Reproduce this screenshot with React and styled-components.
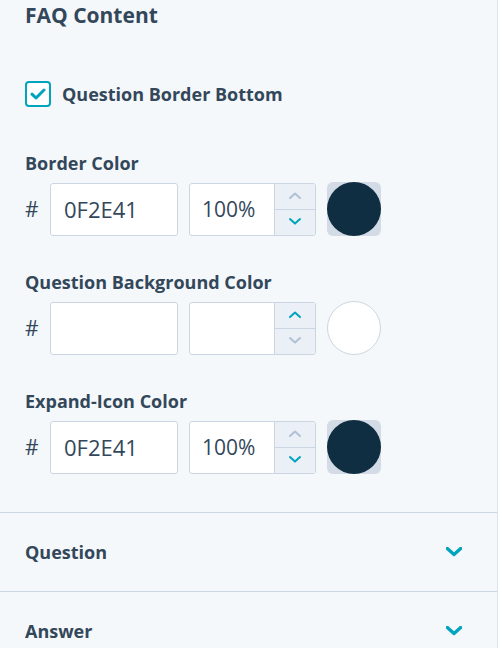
import React from "react";
import styled, { createGlobalStyle } from "styled-components";

const GlobalStyle = createGlobalStyle`
  html, body {
    margin: 0;
    padding: 0;
    background: #ffffff;
  }
  body {
    font-family: "Open Sans", "Noto Sans", sans-serif;
    color: #33475b;
  }
`;

const Panel = styled.div`
  width: 497px;
  height: 648px;
  background: #f5f8fa;
  border-right: 1px solid #dfe3eb;
  overflow: hidden;
`;

const Section = styled.div`
  padding: 0 25px 38px 25px;
`;

const Title = styled.h2`
  margin: 0;
  padding-top: 2px;
  font-size: 21px;
  font-weight: 700;
  line-height: 27px;
  color: #33475b;
`;

const CheckRow = styled.label`
  display: flex;
  align-items: center;
  gap: 11px;
  margin-top: 52px;
  font-size: 18px;
  font-weight: 700;
`;

const CheckBox = styled.span`
  width: 26px;
  height: 26px;
  box-sizing: border-box;
  border: 2px solid #00a4bd;
  border-radius: 4px;
  background: #ffffff;
  display: flex;
  align-items: center;
  justify-content: center;
`;

const Field = styled.div`
  margin-top: ${(p) => p.$top}px;
`;

const Label = styled.div`
  font-size: 18px;
  font-weight: 700;
  line-height: 22px;
  margin-bottom: 8px;
`;

const ColorRow = styled.div`
  display: flex;
  align-items: center;
`;

const Hash = styled.span`
  width: 25px;
  font-size: 21px;
  color: #33475b;
`;

const HexBox = styled.div`
  width: 128px;
  height: 53px;
  box-sizing: border-box;
  border: 1px solid #cbd6e2;
  border-radius: 3px;
  background: #ffffff;
  display: flex;
  align-items: center;
  padding-left: 13px;
  font-size: 22px;
`;

const AlphaBox = styled.div`
  margin-left: 11px;
  width: 127px;
  height: 53px;
  box-sizing: border-box;
  border: 1px solid #cbd6e2;
  border-radius: 3px;
  background: #ffffff;
  display: flex;
  overflow: hidden;
`;

const AlphaValue = styled.div`
  flex: 1;
  display: flex;
  align-items: center;
  padding-left: 12px;
  font-size: 21px;
`;

const Stepper = styled.div`
  width: 40px;
  border-left: 1px solid #cbd6e2;
  background: #eaf0f6;
  display: flex;
  flex-direction: column;
`;

const StepButton = styled.div`
  flex: 1;
  display: flex;
  align-items: center;
  justify-content: center;
  & + & {
    border-top: 1px solid #cbd6e2;
  }
`;

const Swatch = styled.div`
  margin-left: 11px;
  width: 54px;
  height: 54px;
  border-radius: 6px;
  background: ${(p) => (p.$empty ? "transparent" : "#d3dce6")};
`;

const Dot = styled.div`
  width: 100%;
  height: 100%;
  box-sizing: border-box;
  border-radius: 50%;
  background: ${(p) => p.$color || "#ffffff"};
  border: ${(p) => (p.$color ? "none" : "1px solid #cbd6e2")};
`;

const Accordion = styled.div`
  border-top: 1px solid #cbd6e2;
  height: 78px;
  padding: 0 35px 0 25px;
  display: flex;
  align-items: center;
  justify-content: space-between;
  font-size: 18px;
  font-weight: 700;
`;

function Chevron({ up, color, size = 12, stroke = 2 }) {
  return (
    <svg width={size} height={size * 0.6} viewBox="0 0 12 7" fill="none">
      <path
        d={up ? "M1 6L6 1.5L11 6" : "M1 1L6 5.5L11 1"}
        stroke={color}
        strokeWidth={stroke}
        strokeLinecap="round"
        strokeLinejoin="round"
      />
    </svg>
  );
}

function ColorField({ label, hex, alpha, top, upActive }) {
  return (
    <Field $top={top}>
      <Label>{label}</Label>
      <ColorRow>
        <Hash>#</Hash>
        <HexBox>{hex}</HexBox>
        <AlphaBox>
          <AlphaValue>{alpha}</AlphaValue>
          <Stepper>
            <StepButton>
              <Chevron up color={upActive ? "#00a4bd" : "#b0c1d4"} />
            </StepButton>
            <StepButton>
              <Chevron color={upActive ? "#b0c1d4" : "#00a4bd"} />
            </StepButton>
          </Stepper>
        </AlphaBox>
        <Swatch $empty={!hex}>
          <Dot $color={hex ? "#" + hex : null} />
        </Swatch>
      </ColorRow>
    </Field>
  );
}

export default function App() {
  return (
    <>
      <GlobalStyle />
      <Panel>
        <Section>
          <Title>FAQ Content</Title>
          <CheckRow>
            <CheckBox>
              <svg width="16" height="12" viewBox="0 0 16 12" fill="none">
                <path
                  d="M2 6.2L6 10L14 2"
                  stroke="#00a4bd"
                  strokeWidth="3"
                  strokeLinecap="round"
                  strokeLinejoin="round"
                />
              </svg>
            </CheckBox>
            Question Border Bottom
          </CheckRow>
          <ColorField label="Border Color" hex="0F2E41" alpha="100%" top={45} />
          <ColorField label="Question Background Color" hex="" alpha="" top={35} upActive />
          <ColorField label="Expand-Icon Color" hex="0F2E41" alpha="100%" top={35} />
        </Section>
        <Accordion>
          Question
          <Chevron color="#00a4bd" size={16} stroke={2.5} />
        </Accordion>
        <Accordion>
          Answer
          <Chevron color="#00a4bd" size={16} stroke={2.5} />
        </Accordion>
      </Panel>
    </>
  );
}
